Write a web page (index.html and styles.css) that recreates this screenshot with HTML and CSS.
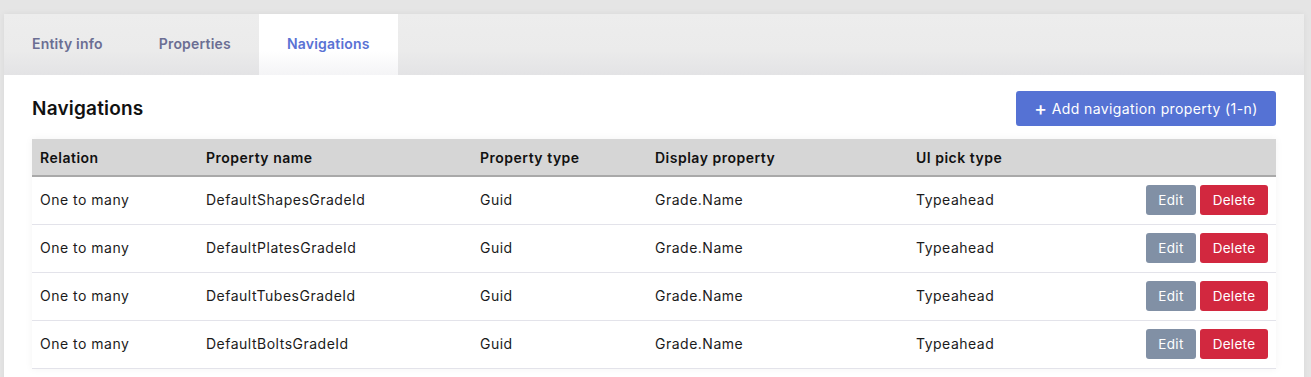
FILE: index.html
```html
<!DOCTYPE html>
<html lang="en">
<head>
<meta charset="utf-8">
<title>Navigations</title>
<link rel="stylesheet" href="styles.css">
</head>
<body>
<div class="card">
  <div class="tabs">
    <div class="tab">Entity info</div>
    <div class="tab">Properties</div>
    <div class="tab active">Navigations</div>
  </div>
  <div class="content">
    <div class="head">
      <h2 class="title">Navigations</h2>
      <button class="btn-add"><span class="plus">+</span> Add navigation property (1-n)</button>
    </div>
    <table class="grid">
      <colgroup>
        <col class="c1"><col class="c2"><col class="c3"><col class="c4"><col class="c5"><col class="c6">
      </colgroup>
      <thead>
        <tr><th>Relation</th><th>Property name</th><th>Property type</th><th>Display property</th><th>UI pick type</th><th></th></tr>
      </thead>
      <tbody>
        <tr><td>One to many</td><td>DefaultShapesGradeId</td><td>Guid</td><td>Grade.Name</td><td>Typeahead</td><td class="actions"><button class="btn edit">Edit</button><button class="btn del">Delete</button></td></tr>
        <tr><td>One to many</td><td>DefaultPlatesGradeId</td><td>Guid</td><td>Grade.Name</td><td>Typeahead</td><td class="actions"><button class="btn edit">Edit</button><button class="btn del">Delete</button></td></tr>
        <tr><td>One to many</td><td>DefaultTubesGradeId</td><td>Guid</td><td>Grade.Name</td><td>Typeahead</td><td class="actions"><button class="btn edit">Edit</button><button class="btn del">Delete</button></td></tr>
        <tr><td>One to many</td><td>DefaultBoltsGradeId</td><td>Guid</td><td>Grade.Name</td><td>Typeahead</td><td class="actions"><button class="btn edit">Edit</button><button class="btn del">Delete</button></td></tr>
      </tbody>
    </table>
  </div>
</div>
</body>
</html>
```
FILE: styles.css
```css
* { box-sizing: border-box; }
html, body { margin: 0; height: 100%; overflow: hidden; }
body {
  background: #e5e5e5;
  font-family: Inter, "Open Sans", sans-serif;
  color: #1b1b1b;
  padding: 14px 7px 0 4px;
}
.card {
  width: 1300px;
  min-height: 400px;
  background: #fff;
  box-shadow: 0 0 6px rgba(0,0,0,0.06);
}
.tabs {
  display: flex;
  height: 61px;
  background: linear-gradient(#ededed, #ebebeb 60%, #e3e3e5);
}
.tab {
  padding: 0 28px;
  display: flex;
  align-items: center;
  padding-bottom: 2px;
  font-size: 14px;
  font-weight: 600;
  color: #6b6e93;
  letter-spacing: 0.2px;
}
.tab.active {
  background: linear-gradient(#fff, #fff 60%, #f4f4f6);
  color: #5a72d4;
}
.content { padding: 16px 28px 0; }
.head {
  display: flex;
  justify-content: space-between;
  align-items: center;
  margin-bottom: 13px;
}
.title {
  margin: 0;
  font-size: 19px;
  font-weight: 600;
  letter-spacing: 0.2px;
  color: #111;
}
.btn-add {
  height: 35px;
  width: 260px;
  border: 0;
  border-radius: 3px;
  background: #5572d4;
  color: #fff;
  font-family: inherit;
  font-size: 14px;
  letter-spacing: 0.4px;
  padding: 0;
}
.btn-add .plus { font-size: 19px; font-weight: 500; line-height: 1; vertical-align: -1px; }
.grid {
  width: 1244px;
  border-collapse: collapse;
  table-layout: fixed;
  box-shadow: 0 0 8px rgba(0,0,0,0.05);
}
.c1 { width: 166px; }
.c2 { width: 274px; }
.c3 { width: 175px; }
.c4 { width: 261px; }
.c5 { width: 200px; }
.grid th {
  background: #d6d6d6;
  height: 37px;
  border-bottom: 2px solid #a9a9a9;
  text-align: left;
  padding: 0 8px;
  font-size: 14px;
  font-weight: 600;
  letter-spacing: 0.5px;
  color: #111;
}
.grid td {
  height: 48px;
  padding: 0 8px 1px;
  border-bottom: 1px solid #e3e3ea;
  font-size: 14px;
  letter-spacing: 0.5px;
  color: #1b1b1b;
  white-space: nowrap;
}
.grid td.actions { text-align: right; font-size: 0; letter-spacing: 0; }
.btn {
  height: 30px;
  border: 0;
  border-radius: 3px;
  color: #fff;
  font-family: inherit;
  font-size: 13.5px;
  letter-spacing: 0.3px;
  padding: 0;
  vertical-align: middle;
}
.btn.edit { width: 50px; background: #8190a5; margin-right: 4px; }
.btn.del { width: 68px; background: #d2283f; }
```
